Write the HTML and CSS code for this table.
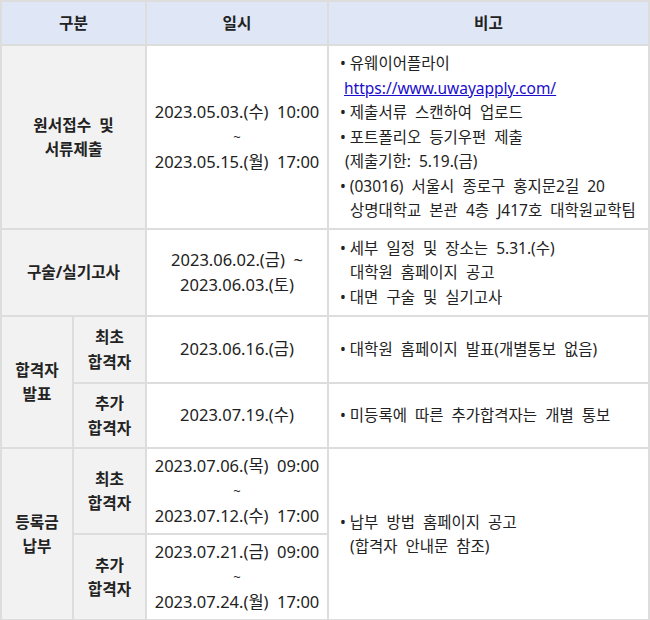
FILE: index.html
```html
<!DOCTYPE html>
<html lang="ko">
<head>
<meta charset="utf-8">
<link rel="stylesheet" href="styles.css">
</head>
<body>
<table class="sched">
  <colgroup>
    <col class="c1"><col class="c2"><col class="c3"><col class="c4">
  </colgroup>
  <thead>
    <tr class="r-head">
      <th colspan="2">구분</th>
      <th>일시</th>
      <th>비고</th>
    </tr>
  </thead>
  <tbody>
    <tr class="r1">
      <th colspan="2" class="cat">원서접수&nbsp; 및<br>서류제출</th>
      <td class="date">2023.05.03.(수)&nbsp; 10:00<br><span class="tilde">~</span><br>2023.05.15.(월)&nbsp; 17:00</td>
      <td class="note">
        <div class="item">• 유웨이어플라이</div>
        <div class="sub1"><a href="#">https://www.uwayapply.com/</a></div>
        <div class="item">• 제출서류&nbsp; 스캔하여&nbsp; 업로드</div>
        <div class="item">• 포트폴리오&nbsp; 등기우편&nbsp; 제출</div>
        <div class="sub2">(제출기한:&nbsp; 5.19.(금)</div>
        <div class="item">• (03016)&nbsp; 서울시&nbsp; 종로구&nbsp; 홍지문2길&nbsp; 20</div>
        <div class="sub3">상명대학교&nbsp; 본관&nbsp; 4층&nbsp; J417호&nbsp; 대학원교학팀</div>
      </td>
    </tr>
    <tr class="r2">
      <th colspan="2" class="cat">구술/실기고사</th>
      <td class="date">2023.06.02.(금)&nbsp; ~<br>2023.06.03.(토)</td>
      <td class="note">
        <div class="item">• 세부&nbsp; 일정&nbsp; 및&nbsp; 장소는&nbsp; 5.31.(수)</div>
        <div class="sub3">대학원&nbsp; 홈페이지&nbsp; 공고</div>
        <div class="item">• 대면&nbsp; 구술&nbsp; 및&nbsp; 실기고사</div>
      </td>
    </tr>
    <tr class="r3a">
      <th rowspan="2" class="cat">합격자<br>발표</th>
      <th class="cat">최초<br>합격자</th>
      <td class="date">2023.06.16.(금)</td>
      <td class="note"><div class="item">• 대학원&nbsp; 홈페이지&nbsp; 발표(개별통보&nbsp; 없음)</div></td>
    </tr>
    <tr class="r3b">
      <th class="cat">추가<br>합격자</th>
      <td class="date">2023.07.19.(수)</td>
      <td class="note"><div class="item">• 미등록에&nbsp; 따른&nbsp; 추가합격자는&nbsp; 개별&nbsp; 통보</div></td>
    </tr>
    <tr class="r4a">
      <th rowspan="2" class="cat">등록금<br>납부</th>
      <th class="cat">최초<br>합격자</th>
      <td class="date">2023.07.06.(목)&nbsp; 09:00<br><span class="tilde">~</span><br>2023.07.12.(수)&nbsp; 17:00</td>
      <td class="note" rowspan="2">
        <div class="item">• 납부&nbsp; 방법&nbsp; 홈페이지&nbsp; 공고</div>
        <div class="sub3">(합격자&nbsp; 안내문&nbsp; 참조)</div>
      </td>
    </tr>
    <tr class="r4b">
      <th class="cat">추가<br>합격자</th>
      <td class="date">2023.07.21.(금)&nbsp; 09:00<br><span class="tilde">~</span><br>2023.07.24.(월)&nbsp; 17:00</td>
    </tr>
  </tbody>
</table>
</body>
</html>
```

FILE: styles.css
```css
html, body {
  margin: 0;
  padding: 0;
  background: #ffffff;
}

.sched {
  border-collapse: collapse;
  table-layout: fixed;
  width: 648px;
  margin: 0;
  font-family: "Noto Sans", "Noto Sans CJK KR", sans-serif;
  font-size: 15.5px;
  line-height: 24.5px;
  color: #222222;
}

.c1 { width: 72px; }
.c2 { width: 73px; }
.c3 { width: 182px; }
.c4 { width: 321px; }

.sched th,
.sched td {
  border: 2px solid #dddddd;
  padding: 0;
  text-align: center;
  vertical-align: middle;
}

.r-head th {
  background: #dfe6f6;
  font-weight: bold;
  font-size: 15.7px;
  height: 42px;
}

.cat {
  background: #f2f2f2;
  font-weight: bold;
  font-size: 15.7px;
}

.date {
  background: #ffffff;
  font-size: 16.5px;
}

.tilde {
  font-size: 13px;
}

.note {
  text-align: left !important;
  padding-left: 11px !important;
  background: #ffffff;
  white-space: nowrap;
}

.sub1 { padding-left: 4px; }
.sub2 { padding-left: 5px; }
.sub3 { padding-left: 10px; }

.note a {
  color: #1a0dcc;
  text-decoration: underline;
}

.r1 > * { height: 182px; }
.r2 > * { height: 85px; }
.r3a > * { height: 65px; }
.r3b > * { height: 63px; }
.r4a > * { height: 84px; }
.r4b > * { height: 84px; }
```
